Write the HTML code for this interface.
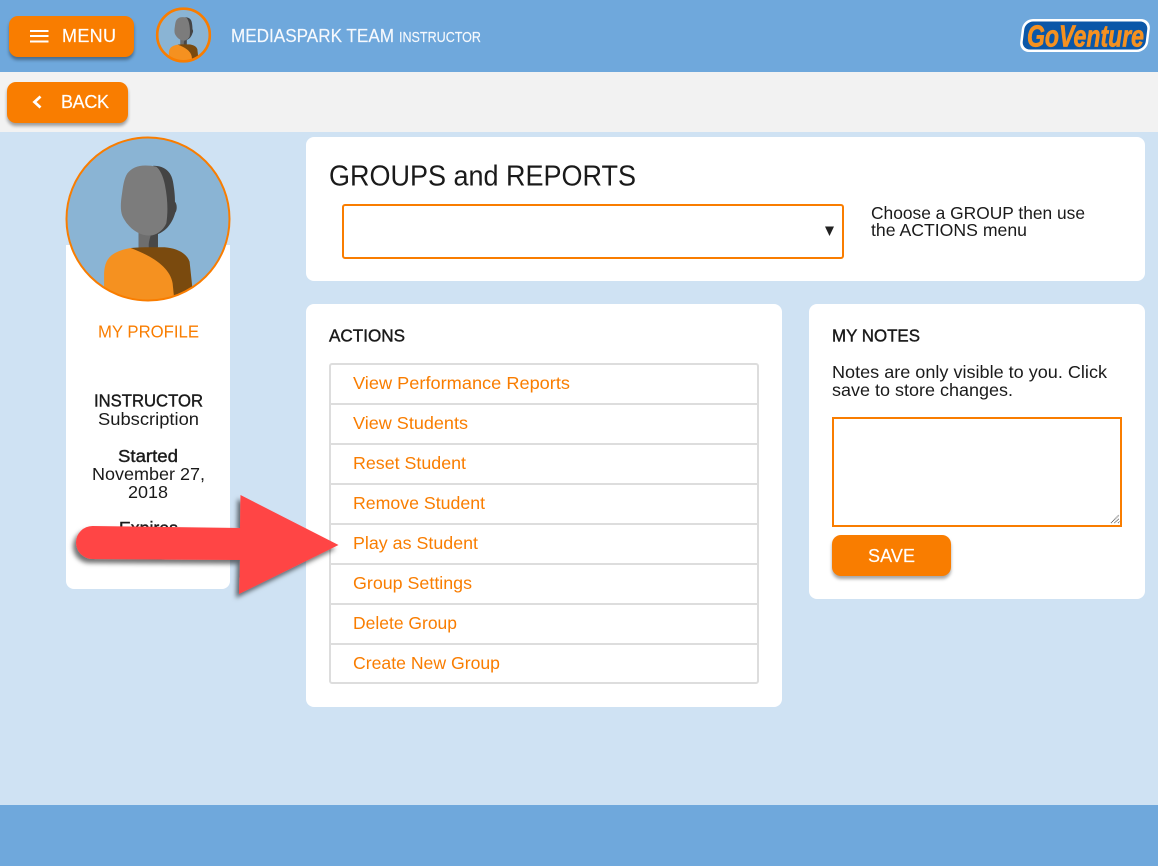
<!DOCTYPE html>
<html lang="en">
<head>
<meta charset="utf-8">
<title>Groups and Reports</title>
<style>
html,body{margin:0;padding:0}
body{width:1158px;height:866px;position:relative;overflow:hidden;background:#cfe2f3;font-family:"Liberation Sans",sans-serif}
.b{position:absolute;box-sizing:border-box}
.card{background:#fff;border-radius:8px}
.btn{background:#f97d00;border-radius:9px;box-shadow:0 3px 3px rgba(0,0,0,.35)}
svg{position:absolute;left:0;top:0;overflow:visible}
text{font-family:"Liberation Sans",sans-serif;font-size:17.5px;fill:#1a1a1a}
.o{fill:#f97d00}
.m{stroke:#1a1a1a;stroke-width:.4px}
.wm{fill:#fff;stroke:#fff;stroke-width:.15px;font-size:18px}
.hd{fill:#f6f9fd;stroke:#f6f9fd;stroke-width:.15px}
.row{position:absolute;left:0;width:426px;height:2px;background:#ddd}
</style>
</head>
<body>
<div class="b" style="left:0;top:0;width:1158px;height:72px;background:#6fa8dc"></div>
<div class="b" style="left:0;top:72px;width:1158px;height:60px;background:#f2f2f2"></div>
<div class="b" style="left:0;top:805px;width:1158px;height:61px;background:#6fa8dc"></div>

<div class="b btn" style="left:9px;top:16px;width:125px;height:41px"></div>
<div class="b btn" style="left:7px;top:82px;width:121px;height:41px"></div>

<div class="b" style="left:66px;top:245px;width:164px;height:344px;background:#fff;border-radius:0 0 8px 8px"></div>
<div class="b card" style="left:306px;top:137px;width:839px;height:144px"></div>
<div class="b" style="left:342px;top:204px;width:502px;height:55px;border:2px solid #f97d00;border-radius:3px;background:#fff"></div>

<div class="b card" style="left:306px;top:304px;width:476px;height:403px"></div>
<div class="b" style="left:329px;top:363px;width:430px;height:321px;border:2px solid #ddd;border-radius:3px;background:#fff">
  <div class="row" style="top:38px"></div>
  <div class="row" style="top:78px"></div>
  <div class="row" style="top:118px"></div>
  <div class="row" style="top:158px"></div>
  <div class="row" style="top:198px"></div>
  <div class="row" style="top:238px"></div>
  <div class="row" style="top:278px"></div>
</div>

<div class="b card" style="left:809px;top:304px;width:336px;height:295px"></div>
<div class="b" style="left:832px;top:417px;width:290px;height:110px;border:2px solid #f97d00;background:#fff"></div>
<div class="b btn" style="left:832px;top:535px;width:119px;height:41px"></div>

<svg width="1158" height="866" viewBox="0 0 1158 866" xmlns="http://www.w3.org/2000/svg">
  <defs>
    <clipPath id="cp"><circle cx="280" cy="267" r="245"/></clipPath>
    <filter id="sh" x="-20%" y="-20%" width="140%" height="140%"><feDropShadow dx="-3" dy="4" stdDeviation="2.500" flood-color="#000" flood-opacity=".55"/></filter>
    <symbol id="av" viewBox="32 19 496 496">
      <circle cx="280" cy="267" r="245" fill="#8ab4d4"/>
      <g clip-path="url(#cp)">
        <path d="M252 305 L310 305 L310 352 L285 364 L252 356Z" fill="#484848"/>
        <path d="M252 305 L288 317 C282 335 280 350 285 364 L252 356Z" fill="#6e6e6e"/>
        <path d="M228 354 C260 351 300 352 330 352 C365 355 395 368 405 395 L413 470 L350 510 Z" fill="#7a4a0e"/>
        <path d="M148 480 L148 430 C150 385 170 365 228 354 C290 378 345 410 354 460 L360 520 L150 520Z" fill="#f59120"/>
        <path d="M296 107 C335 107 352 130 356 160 C360 185 361 200 361 215 C368 222 368 240 362 248 C352 285 325 317 285 317 L290 200Z" fill="#444"/>
        <path d="M272 106 C248 106 230 114 218 130 C208 145 205 168 202 190 C198 215 196 240 203 258 C218 290 248 317 285 317 C305 316 325 302 335 280 C340 250 340 210 331 165 C326 140 316 118 305 110 C295 107 284 106 272 106Z" fill="#7c7c7c"/>
      </g>
      <circle cx="280" cy="267" r="245" fill="none" stroke="#f97d00" stroke-width="6"/>
    </symbol>
  </defs>

  <!-- top bar -->
  <rect x="30" y="30" width="18.500" height="2" fill="#fff"/>
  <rect x="30" y="35" width="18.500" height="2" fill="#fff"/>
  <rect x="30" y="40.500" width="18.500" height="2" fill="#fff"/>
  <text class="wm" x="62" y="42" textLength="54">MENU</text>
  <path d="M40.500 96.500 L34.500 102 L40.500 107.500" fill="none" stroke="#fff" stroke-width="2.800"/>
  <text class="wm" x="61" y="108" textLength="48">BACK</text>

  <use href="#av" x="156" y="7.500" width="55" height="55"/>
  <circle cx="183.500" cy="35" r="26.300" fill="none" stroke="#f97d00" stroke-width="2.600"/>
  <text class="hd" x="231" y="42" textLength="163" lengthAdjust="spacingAndGlyphs" style="font-size:18px">MEDIASPARK TEAM</text>
  <text class="hd" x="399" y="42" textLength="82" lengthAdjust="spacingAndGlyphs" style="font-size:14.400px">INSTRUCTOR</text>

  <!-- logo -->
  <g transform="translate(1085 35.500) skewX(-7)">
    <rect x="-64" y="-16.500" width="128" height="33" rx="10" fill="#fff"/>
    <rect x="-61.500" y="-14" width="123" height="28" rx="8" fill="#0b57a8"/>
  </g>
  <text x="1027" y="46.500" textLength="117" lengthAdjust="spacingAndGlyphs" style="font-size:31px;font-weight:bold;font-style:italic;fill:#f59120;stroke:#f59120;stroke-width:.7px">GoVenture</text>

  <!-- large avatar -->
  <use href="#av" x="65.500" y="136.500" width="165" height="165"/>

  <!-- sidebar -->
  <text class="o" x="98" y="337.500" textLength="101" lengthAdjust="spacingAndGlyphs">MY PROFILE</text>
  <text class="m" x="94" y="406.500" textLength="109" lengthAdjust="spacingAndGlyphs">INSTRUCTOR</text>
  <text x="98" y="425" textLength="101" lengthAdjust="spacingAndGlyphs">Subscription</text>
  <text class="m" x="118" y="462" textLength="60" lengthAdjust="spacingAndGlyphs">Started</text>
  <text x="92" y="480" textLength="113" lengthAdjust="spacingAndGlyphs">November 27,</text>
  <text x="128" y="498" textLength="40" lengthAdjust="spacingAndGlyphs">2018</text>
  <text class="m" x="119" y="534" textLength="59" lengthAdjust="spacingAndGlyphs">Expires</text>

  <!-- groups card -->
  <text x="329" y="185.500" textLength="307" lengthAdjust="spacingAndGlyphs" style="font-size:28.500px">GROUPS and REPORTS</text>
  <path d="M825 226.500 H834 L829.500 236Z" fill="#222"/>
  <text x="871" y="219" textLength="214" lengthAdjust="spacingAndGlyphs">Choose a GROUP then use</text>
  <text x="871" y="236" textLength="156" lengthAdjust="spacingAndGlyphs">the ACTIONS menu</text>

  <!-- actions -->
  <text class="m" x="329" y="341.500" textLength="76" lengthAdjust="spacingAndGlyphs">ACTIONS</text>
  <text class="o" x="353" y="389" textLength="217" lengthAdjust="spacingAndGlyphs">View Performance Reports</text>
  <text class="o" x="353" y="429" textLength="115" lengthAdjust="spacingAndGlyphs">View Students</text>
  <text class="o" x="353" y="469" textLength="113" lengthAdjust="spacingAndGlyphs">Reset Student</text>
  <text class="o" x="353" y="509" textLength="132" lengthAdjust="spacingAndGlyphs">Remove Student</text>
  <text class="o" x="353" y="549" textLength="125" lengthAdjust="spacingAndGlyphs">Play as Student</text>
  <text class="o" x="353" y="589" textLength="119" lengthAdjust="spacingAndGlyphs">Group Settings</text>
  <text class="o" x="353" y="629" textLength="104" lengthAdjust="spacingAndGlyphs">Delete Group</text>
  <text class="o" x="353" y="669" textLength="147" lengthAdjust="spacingAndGlyphs">Create New Group</text>

  <!-- notes -->
  <text class="m" x="832" y="341.500" textLength="88" lengthAdjust="spacingAndGlyphs">MY NOTES</text>
  <text x="832" y="378" textLength="275" lengthAdjust="spacingAndGlyphs">Notes are only visible to you. Click</text>
  <text x="832" y="396" textLength="181" lengthAdjust="spacingAndGlyphs">save to store changes.</text>
  <path d="M1111 523 L1119 515 M1114.500 523 L1119 518.500 M1118 523 L1119.500 521.500" stroke="#555" stroke-width="1" stroke-dasharray="1 .6" fill="none"/>
  <text class="wm" x="868" y="562" textLength="47">SAVE</text>

  <!-- arrow -->
  <path d="M92.500 526 L240 528 L240.500 495 L338.500 545 L239 594 L240 560 L92.500 559 A16.500 16.500 0 0 1 92.500 526Z" fill="#ff4444" filter="url(#sh)"/>
</svg>
</body>
</html>
